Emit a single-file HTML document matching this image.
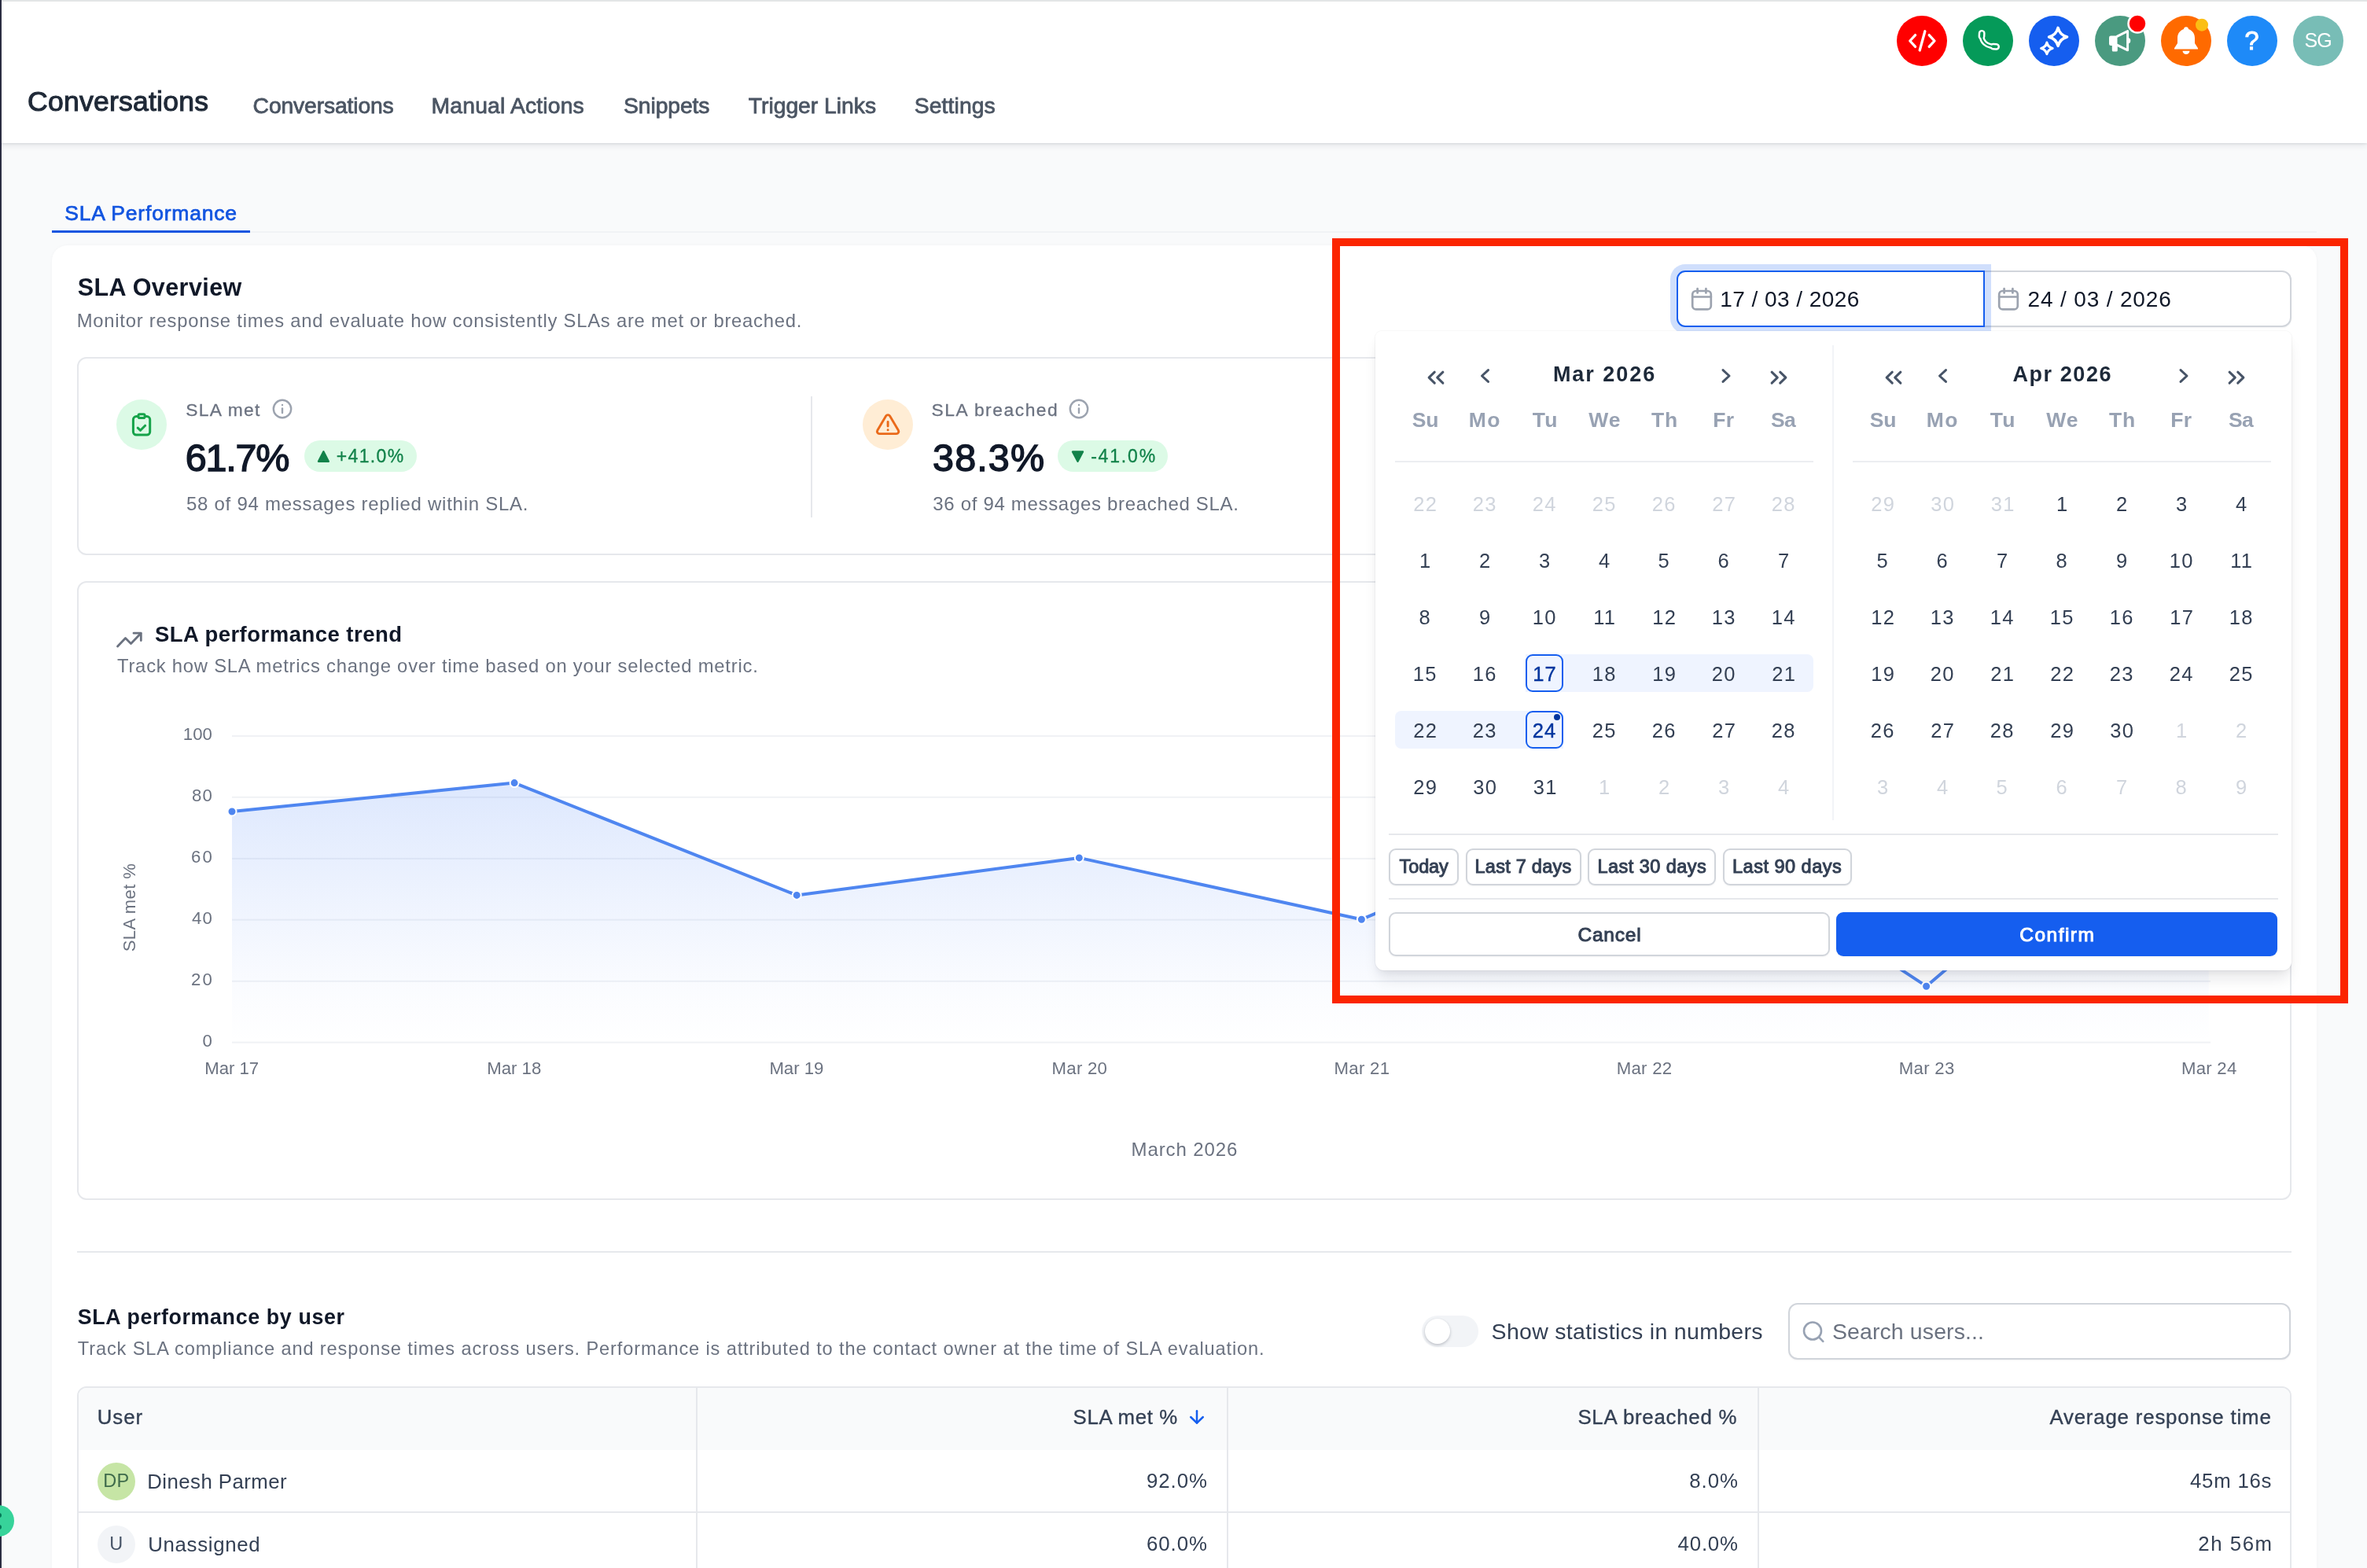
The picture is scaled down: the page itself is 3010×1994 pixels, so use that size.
<!DOCTYPE html>
<html lang="en"><head><meta charset="utf-8"><title>SLA Performance</title>
<style>
html,body{margin:0;padding:0}
body{width:3010px;height:1994px;overflow:hidden;background:#f9fafb;position:relative;font-family:'Liberation Sans',sans-serif;}
.t{position:absolute;white-space:nowrap;line-height:1;font-weight:400}
#aa{position:absolute;left:0;top:0;width:3010px;height:1994px;transform:translateZ(0);will-change:transform}
div{box-sizing:content-box}
</style></head>
<body><div id="aa">
<div style="position:absolute;left:66px;top:294px;width:2880px;height:2px;background:#f1f3f5;"></div>
<div style="position:absolute;left:66px;top:293px;width:252px;height:3px;background:#1355e0;"></div>
<div style="position:absolute;left:66px;top:312px;width:2880px;height:1720px;background:#fff;border-radius:20px;box-shadow:0 0 4px rgba(16,24,40,.03);"></div>
<div style="position:absolute;left:98px;top:453.5px;width:2812px;height:248px;border:2px solid #e6e8ec;border-radius:12px;"></div>
<div style="position:absolute;left:1031px;top:504px;width:2px;height:154px;background:#e6e8ec;"></div>
<div style="position:absolute;left:1969px;top:504px;width:2px;height:154px;background:#e6e8ec;"></div>
<div style="position:absolute;left:148px;top:508px;width:64px;height:64px;border-radius:50%;background:#dcfae6;"></div>
<div style="position:absolute;left:1097px;top:508px;width:64px;height:64px;border-radius:50%;background:#ffedd5;"></div>
<svg style="position:absolute;left:0;top:440px" width="1700" height="280" viewBox="0 440 1700 280" fill="none" stroke-linecap="round" stroke-linejoin="round"><g stroke="#16a34a" stroke-width="3"><path d="M175.500,529.600 h-2.100 a4,4 0 0 0 -4,4 v15.500 a4,4 0 0 0 4,4 h13.300 a4,4 0 0 0 4,-4 v-15.500 a4,4 0 0 0 -4,-4 h-2.100"/><rect x="176" y="526.700" width="8.100" height="4.800" rx="1.600"/><polyline points="175.200,544.200 178.600,547.300 184.600,541.200"/></g><g stroke="#ea6a1a" stroke-width="2.900"><path d="M1126.600,529.100 L1115.800,547.300 a2.900,2.900 0 0 0 2.500,4.300 h21.600 a2.900,2.900 0 0 0 2.500,-4.300 L1131.600,529.100 a2.900,2.900 0 0 0 -5,0 z"/><line x1="1129.100" y1="536.500" x2="1129.100" y2="542"/><line x1="1129.100" y1="546.800" x2="1129.100" y2="546.900"/></g><g stroke="#9ca3af" stroke-width="2.400"><circle cx="359" cy="520" r="11.200"/><line x1="359" y1="519.500" x2="359" y2="525"/><line x1="359" y1="515" x2="359" y2="515.100"/></g><g stroke="#9ca3af" stroke-width="2.400"><circle cx="1372" cy="520" r="11.200"/><line x1="1372" y1="519.500" x2="1372" y2="525"/><line x1="1372" y1="515" x2="1372" y2="515.100"/></g></svg>
<div style="position:absolute;left:387px;top:560px;width:143px;height:40px;border-radius:20px;background:#dcfae6;"></div>
<div style="position:absolute;left:1345px;top:560px;width:140px;height:40px;border-radius:20px;background:#dcfae6;"></div>
<svg style="position:absolute;left:380px;top:560px" width="1120" height="40" viewBox="380 560 1120 40" fill="#12824a" stroke="#12824a" stroke-width="2.400" stroke-linejoin="round"><polygon points="405,586.700 417.800,586.700 411.400,574.300"/><polygon points="1364,574.500 1377,574.500 1370.500,586.800"/></svg>
<div style="position:absolute;left:98px;top:739px;width:2812px;height:783px;border:2px solid #e6e8ec;border-radius:12px;"></div>
<svg style="position:absolute;left:0;top:760px" width="3010" height="640" viewBox="0 760 3010 640" fill="none"><defs><linearGradient id="ag" x1="0" y1="0" x2="0" y2="1"><stop offset="0" stop-color="#4f86f7" stop-opacity="0.22"/><stop offset="0.800" stop-color="#4f86f7" stop-opacity="0.030"/><stop offset="1" stop-color="#4f86f7" stop-opacity="0"/></linearGradient></defs><g stroke="#6b7280" stroke-width="2.800" stroke-linecap="round" stroke-linejoin="round"><polyline points="149.500,822 159.500,811.500 166.500,818.500 179,805.500"/><polyline points="170,805.200 179.300,805.200 179.300,814.500"/></g><rect x="295" y="935.0" width="2516" height="2" fill="#f0f2f5"/><rect x="295" y="1012.8" width="2516" height="2" fill="#f0f2f5"/><rect x="295" y="1090.9" width="2516" height="2" fill="#f0f2f5"/><rect x="295" y="1168.7" width="2516" height="2" fill="#f0f2f5"/><rect x="295" y="1246.8" width="2516" height="2" fill="#f0f2f5"/><rect x="295" y="1324.6" width="2516" height="2" fill="#f0f2f5"/><polygon points="295.0,1325.600 295.0,1032.0 654.1,995.6 1013.2,1138.4 1372.3,1090.9 1731.4,1169.2 2090.5,1018.0 2449.6,1254.2 2808.7,948.3 2808.7,1325.600" fill="url(#ag)"/><polyline points="295.0,1032.0 654.1,995.6 1013.2,1138.4 1372.3,1090.9 1731.4,1169.2 2090.5,1018.0 2449.6,1254.2 2808.7,948.3" stroke="#4f86f0" stroke-width="4" stroke-linejoin="round" stroke-linecap="round"/><circle cx="295.0" cy="1032.0" r="5.500" fill="#4f86f0" stroke="#fff" stroke-width="2"/><circle cx="654.1" cy="995.6" r="5.500" fill="#4f86f0" stroke="#fff" stroke-width="2"/><circle cx="1013.2" cy="1138.4" r="5.500" fill="#4f86f0" stroke="#fff" stroke-width="2"/><circle cx="1372.3" cy="1090.9" r="5.500" fill="#4f86f0" stroke="#fff" stroke-width="2"/><circle cx="1731.4" cy="1169.2" r="5.500" fill="#4f86f0" stroke="#fff" stroke-width="2"/><circle cx="2090.5" cy="1018.0" r="5.500" fill="#4f86f0" stroke="#fff" stroke-width="2"/><circle cx="2449.6" cy="1254.2" r="5.500" fill="#4f86f0" stroke="#fff" stroke-width="2"/><circle cx="2808.7" cy="948.3" r="5.500" fill="#4f86f0" stroke="#fff" stroke-width="2"/></svg>
<div style="position:absolute;left:98px;top:1591px;width:2816px;height:2px;background:#e6e8ec;"></div>
<div style="position:absolute;left:1808px;top:1673px;width:72px;height:40px;background:#f2f4f7;border-radius:20px;"></div>
<div style="position:absolute;left:1812px;top:1677px;width:32px;height:32px;background:#fff;border-radius:50%;box-shadow:0 2px 4px rgba(16,24,40,.14),0 1px 3px rgba(16,24,40,.12);"></div>
<div style="position:absolute;left:2274px;top:1657px;width:635px;height:68px;background:#fff;border:2px solid #d1d5db;border-radius:12px;box-shadow:0 1px 2px rgba(16,24,40,.05);"></div>
<svg style="position:absolute;left:2290px;top:1676px" width="34" height="34" viewBox="2290 1676 34 34" fill="none" stroke="#98a2b3" stroke-width="2.600" stroke-linecap="round"><circle cx="2305" cy="1692.500" r="11"/><line x1="2313.200" y1="1700.700" x2="2318.300" y2="1705.800"/></svg>
<div style="position:absolute;left:98px;top:1763px;width:2812px;height:300px;border:2px solid #e6e8ec;border-radius:12px;background:#fff;overflow:hidden;"></div>
<div style="position:absolute;left:100px;top:1765px;width:2812px;height:78.5px;background:#f9fafb;border-radius:10px 10px 0 0;"></div>
<div style="position:absolute;left:885px;top:1765px;width:2px;height:300px;background:#e6e8ec;"></div>
<div style="position:absolute;left:1560px;top:1765px;width:2px;height:300px;background:#e6e8ec;"></div>
<div style="position:absolute;left:2235px;top:1765px;width:2px;height:300px;background:#e6e8ec;"></div>
<div style="position:absolute;left:100px;top:1922px;width:2812px;height:2px;background:#e6e8ec;"></div>
<svg style="position:absolute;left:1508px;top:1788px" width="28" height="28" viewBox="1508 1788 28 28" fill="none" stroke="#155eef" stroke-width="2.500" stroke-linecap="round" stroke-linejoin="round"><line x1="1522" y1="1794.200" x2="1522" y2="1809.400"/><polyline points="1514.200,1802 1522,1809.600 1529.800,1802"/></svg>
<div style="position:absolute;left:124px;top:1860px;width:48px;height:48px;background:#c6e5a5;border-radius:50%;"></div>
<div style="position:absolute;left:124px;top:1940px;width:48px;height:48px;background:#f2f4f7;border-radius:50%;"></div>
<div style="position:absolute;left:0px;top:0px;width:3010px;height:182px;background:#fff;box-shadow:0 3px 8px rgba(16,24,40,.09),0 1px 3px rgba(16,24,40,.09);"></div>
<div style="position:absolute;left:0px;top:0px;width:3010px;height:2px;background:#e3e5e6;"></div>
<div style="position:absolute;left:2412px;top:20px;width:64px;height:64px;border-radius:50%;background:#ff0000;"></div>
<div style="position:absolute;left:2496px;top:20px;width:64px;height:64px;border-radius:50%;background:#059a59;"></div>
<div style="position:absolute;left:2580px;top:20px;width:64px;height:64px;border-radius:50%;background:#155eef;"></div>
<div style="position:absolute;left:2664px;top:20px;width:64px;height:64px;border-radius:50%;background:#4a9a80;"></div>
<div style="position:absolute;left:2748px;top:20px;width:64px;height:64px;border-radius:50%;background:#ff6a00;"></div>
<div style="position:absolute;left:2832px;top:20px;width:64px;height:64px;border-radius:50%;background:#1e8af8;"></div>
<div style="position:absolute;left:2916px;top:20px;width:64px;height:64px;border-radius:50%;background:#78bdb6;"></div>
<svg style="position:absolute;left:0;top:0" width="3010" height="182" viewBox="0 0 3010 182" fill="none" stroke="#fff" stroke-linecap="round" stroke-linejoin="round"><g stroke-width="3.3"><polyline points="2435.6,44.6 2428.8,52 2435.6,59.4"/><polyline points="2453.2,44.6 2460,52 2453.2,59.4"/><line x1="2447.9" y1="39.8" x2="2441.2" y2="64"/></g><g stroke="#fff" fill="none"><path d="M2520.100,43.200 Q2519,58.300 2537.800,59.300" stroke-width="6.900"/><path d="M2520.200,42.300 L2520,46.300" stroke-width="8.800"/><path d="M2534.600,59.100 L2538.600,59.400" stroke-width="8.800"/></g><g stroke="#059a59" fill="none"><path d="M2520.100,43.200 Q2519,58.300 2537.800,59.300" stroke-width="2.100"/><path d="M2520.200,42.300 L2520,46.300" stroke-width="3.900"/><path d="M2534.600,59.100 L2538.600,59.400" stroke-width="3.900"/></g><path d="M2617.1,35.4 Q2619.4,44.6 2628.6,46.9 Q2619.4,49.2 2617.1,58.4 Q2614.8,49.2 2605.6,46.9 Q2614.8,44.6 2617.1,35.4Z" stroke-width="3.600"/><path d="M2602.9,54.1 Q2604.3,60.0 2610.2,61.4 Q2604.3,62.8 2602.9,68.7 Q2601.5,62.8 2595.6,61.4 Q2601.5,60.0 2602.9,54.1Z" stroke-width="3.100"/><g fill="#fff" stroke="none"><path d="M2682,47.8 q0,-2.300 2.300,-2.300 h8.200 v12.500 h-8.200 q-2.300,0 -2.300,-2.300 z"/><path d="M2685.800,57 h7 v7 q0,1.500 -1.500,1.500 h-4 q-1.500,0 -1.500,-1.500 z"/><path d="M2706.500,48 q2.800,0.600 2.800,3.800 q0,3.200 -2.800,3.800 z"/></g><path d="M2692.500,46.200 L2705.600,39.600 V63.800 L2692.500,57.300" stroke="#fff" stroke-width="3" fill="none"/><circle cx="2718" cy="30" r="11.5" fill="#ff0000" stroke="#fff" stroke-width="2.5"/><g fill="#fff" stroke="none"><path d="M2780,34.200 c1.800,0 3,1.200 3,2.900 c5,1.600 8,6 8,11.400 v6.500 l4,6.200 v1.300 h-30 v-1.300 l4,-6.200 v-6.500 c0,-5.400 3,-9.800 8,-11.400 c0,-1.700 1.200,-2.900 3,-2.900 z"/><path d="M2775.500,64.800 h9 a4.500,4.200 0 0 1 -9,0 z"/></g><circle cx="2800" cy="31.700" r="8" fill="#fbbf14" stroke="none"/></svg>
<!-- text layer (page) -->
<span class="t" style="left:35.05px;top:112.26px;font-size:35.6px;color:#1f2937;letter-spacing:0.206px;-webkit-text-stroke:1.1px #1f2937;">Conversations</span>
<span class="t" style="left:321.60px;top:120.14px;font-size:28.3px;color:#4b5563;letter-spacing:-0.144px;-webkit-text-stroke:0.8px #4b5563;">Conversations</span>
<span class="t" style="left:548.60px;top:120.14px;font-size:28.3px;color:#4b5563;letter-spacing:0.168px;-webkit-text-stroke:0.8px #4b5563;">Manual Actions</span>
<span class="t" style="left:793.10px;top:120.14px;font-size:28.3px;color:#4b5563;letter-spacing:-0.110px;-webkit-text-stroke:0.8px #4b5563;">Snippets</span>
<span class="t" style="left:951.80px;top:120.14px;font-size:28.3px;color:#4b5563;letter-spacing:-0.021px;-webkit-text-stroke:0.8px #4b5563;">Trigger Links</span>
<span class="t" style="left:1162.80px;top:120.14px;font-size:28.3px;color:#4b5563;letter-spacing:0.101px;-webkit-text-stroke:0.8px #4b5563;">Settings</span>
<span class="t" style="left:2854.50px;top:36.29px;font-size:32.5px;color:#fff;-webkit-text-stroke:1.0px #fff;">?</span>
<span class="t" style="left:2930.40px;top:39.14px;font-size:25px;color:#fff;letter-spacing:-0.875px;">SG</span>
<span class="t" style="left:82.17px;top:257.77px;font-size:26.5px;color:#1355e0;letter-spacing:0.802px;-webkit-text-stroke:0.75px #1355e0;">SLA Performance</span>
<span class="t" style="left:98.70px;top:350.08px;font-size:30.5px;color:#101828;letter-spacing:0.419px;font-weight:700;">SLA Overview</span>
<span class="t" style="left:97.70px;top:396.15px;font-size:23.8px;color:#6b7280;letter-spacing:0.770px;">Monitor response times and evaluate how consistently SLAs are met or breached.</span>
<span class="t" style="left:236.15px;top:509.90px;font-size:22.8px;color:#6b7280;letter-spacing:1.351px;-webkit-text-stroke:0.3px #6b7280;">SLA met</span>
<span class="t" style="left:235.72px;top:557.74px;font-size:48.5px;color:#101828;letter-spacing:-1.211px;-webkit-text-stroke:1.45px #101828;">61.7%</span>
<span class="t" style="left:427.85px;top:569.33px;font-size:23px;color:#12824a;letter-spacing:1.321px;-webkit-text-stroke:0.3px #12824a;">+41.0%</span>
<span class="t" style="left:237.00px;top:629.48px;font-size:24px;color:#6b7280;letter-spacing:0.726px;">58 of 94 messages replied within SLA.</span>
<span class="t" style="left:1184.55px;top:509.90px;font-size:22.8px;color:#6b7280;letter-spacing:1.545px;-webkit-text-stroke:0.3px #6b7280;">SLA breached</span>
<span class="t" style="left:1186.02px;top:557.74px;font-size:48.5px;color:#101828;letter-spacing:1.139px;-webkit-text-stroke:1.45px #101828;">38.3%</span>
<span class="t" style="left:1387.15px;top:569.33px;font-size:23px;color:#12824a;letter-spacing:1.815px;-webkit-text-stroke:0.3px #12824a;">-41.0%</span>
<span class="t" style="left:1186.30px;top:629.48px;font-size:24px;color:#6b7280;letter-spacing:0.678px;">36 of 94 messages breached SLA.</span>
<span class="t" style="left:196.90px;top:793.12px;font-size:27.5px;color:#101828;letter-spacing:0.474px;font-weight:700;">SLA performance trend</span>
<span class="t" style="left:149.00px;top:834.65px;font-size:23.8px;color:#6b7280;letter-spacing:0.772px;">Track how SLA metrics change over time based on your selected metric.</span>
<span class="t" style="left:232.80px;top:923.41px;font-size:22.2px;color:#6b7280;letter-spacing:0.010px;">100</span>
<span class="t" style="left:243.90px;top:1001.21px;font-size:22.2px;color:#6b7280;letter-spacing:1.260px;">80</span>
<span class="t" style="left:242.90px;top:1079.31px;font-size:22.2px;color:#6b7280;letter-spacing:2.260px;">60</span>
<span class="t" style="left:243.90px;top:1157.11px;font-size:22.2px;color:#6b7280;letter-spacing:1.260px;">40</span>
<span class="t" style="left:242.90px;top:1235.21px;font-size:22.2px;color:#6b7280;letter-spacing:2.260px;">20</span>
<span class="t" style="left:257.50px;top:1313.01px;font-size:22.2px;color:#6b7280;">0</span>
<span class="t" style="left:260.20px;top:1348.11px;font-size:22.2px;color:#6b7280;letter-spacing:-0.023px;">Mar 17</span>
<span class="t" style="left:619.30px;top:1348.11px;font-size:22.2px;color:#6b7280;letter-spacing:-0.023px;">Mar 18</span>
<span class="t" style="left:978.40px;top:1348.11px;font-size:22.2px;color:#6b7280;letter-spacing:-0.023px;">Mar 19</span>
<span class="t" style="left:1337.50px;top:1348.11px;font-size:22.2px;color:#6b7280;letter-spacing:0.277px;">Mar 20</span>
<span class="t" style="left:1696.60px;top:1348.11px;font-size:22.2px;color:#6b7280;letter-spacing:0.277px;">Mar 21</span>
<span class="t" style="left:2055.70px;top:1348.11px;font-size:22.2px;color:#6b7280;letter-spacing:0.277px;">Mar 22</span>
<span class="t" style="left:2414.80px;top:1348.11px;font-size:22.2px;color:#6b7280;letter-spacing:0.277px;">Mar 23</span>
<span class="t" style="left:2773.90px;top:1348.11px;font-size:22.2px;color:#6b7280;letter-spacing:0.277px;">Mar 24</span>
<span class="t" style="left:108.59px;top:1142.50px;font-size:22px;color:#6b7280;letter-spacing:0.420px;transform:rotate(-90deg);transform-origin:50% 50%;">SLA met %</span>
<span class="t" style="left:1438.60px;top:1449.68px;font-size:24px;color:#6b7280;letter-spacing:0.879px;">March 2026</span>
<span class="t" style="left:98.80px;top:1662.01px;font-size:26.8px;color:#101828;letter-spacing:0.636px;font-weight:700;">SLA performance by user</span>
<span class="t" style="left:98.80px;top:1704.42px;font-size:23.6px;color:#6b7280;letter-spacing:0.869px;">Track SLA compliance and response times across users. Performance is attributed to the contact owner at the time of SLA evaluation.</span>
<span class="t" style="left:1896.60px;top:1678.57px;font-size:28.5px;color:#344054;letter-spacing:0.303px;">Show statistics in numbers</span>
<span class="t" style="left:2329.90px;top:1678.57px;font-size:28.5px;color:#6b7280;letter-spacing:0.104px;">Search users...</span>
<span class="t" style="left:123.77px;top:1789.86px;font-size:25.8px;color:#344054;letter-spacing:0.958px;-webkit-text-stroke:0.35px #344054;">User</span>
<span class="t" style="left:1364.58px;top:1789.66px;font-size:25.8px;color:#344054;letter-spacing:0.632px;-webkit-text-stroke:0.35px #344054;">SLA met %</span>
<span class="t" style="left:2006.38px;top:1789.66px;font-size:25.8px;color:#344054;letter-spacing:0.753px;-webkit-text-stroke:0.35px #344054;">SLA breached %</span>
<span class="t" style="left:2606.38px;top:1789.66px;font-size:25.8px;color:#344054;letter-spacing:0.829px;-webkit-text-stroke:0.35px #344054;">Average response time</span>
<span class="t" style="left:131.16px;top:1872.41px;font-size:23.5px;color:#3f6b4b;letter-spacing:0.300px;">DP</span>
<span class="t" style="left:139.30px;top:1952.41px;font-size:23.5px;color:#475467;">U</span>
<span class="t" style="left:187.30px;top:1871.96px;font-size:25.8px;color:#344054;letter-spacing:0.438px;">Dinesh Parmer</span>
<span class="t" style="left:188.30px;top:1951.86px;font-size:25.8px;color:#344054;letter-spacing:0.667px;">Unassigned</span>
<span class="t" style="left:1458.00px;top:1871.36px;font-size:25.8px;color:#344054;letter-spacing:0.948px;">92.0%</span>
<span class="t" style="left:1458.00px;top:1950.86px;font-size:25.8px;color:#344054;letter-spacing:0.948px;">60.0%</span>
<span class="t" style="left:2148.20px;top:1871.36px;font-size:25.8px;color:#344054;letter-spacing:0.980px;">8.0%</span>
<span class="t" style="left:2133.60px;top:1950.86px;font-size:25.8px;color:#344054;letter-spacing:0.798px;">40.0%</span>
<span class="t" style="left:2785.00px;top:1871.36px;font-size:25.8px;color:#344054;letter-spacing:0.759px;">45m 16s</span>
<span class="t" style="left:2795.30px;top:1950.86px;font-size:25.8px;color:#344054;letter-spacing:1.549px;">2h 56m</span>
<div style="position:absolute;left:2524px;top:344px;width:387.5px;height:68px;background:#fff;border:2px solid #d1d5db;border-left:none;border-radius:0 12px 12px 0;box-shadow:0 1px 2px rgba(16,24,40,.05);"></div>
<div style="position:absolute;left:2132px;top:344px;width:388px;height:68px;background:#fff;border:2px solid #155eef;border-radius:11px 0 0 11px;box-shadow:0 0 0 8px rgba(21,94,239,.20);"></div>
<svg style="position:absolute;left:2100px;top:330px" width="840" height="100" viewBox="2100 330 840 100"><g transform="translate(2151,366)" stroke="#9ca3af" stroke-width="2.700" fill="none" stroke-linecap="round" stroke-linejoin="round"><rect x="1.200" y="4" width="23.600" height="23.400" rx="4.500"/><line x1="1.200" y1="11.500" x2="24.800" y2="11.500"/><line x1="7.600" y1="1.200" x2="7.600" y2="6.500"/><line x1="18.400" y1="1.200" x2="18.400" y2="6.500"/></g><g transform="translate(2541,366)" stroke="#9ca3af" stroke-width="2.700" fill="none" stroke-linecap="round" stroke-linejoin="round"><rect x="1.200" y="4" width="23.600" height="23.400" rx="4.500"/><line x1="1.200" y1="11.500" x2="24.800" y2="11.500"/><line x1="7.600" y1="1.200" x2="7.600" y2="6.500"/><line x1="18.400" y1="1.200" x2="18.400" y2="6.500"/></g></svg>
<div style="position:absolute;left:1749px;top:421px;width:1165px;height:813px;background:#fff;border-radius:8px 8px 11px 11px;box-shadow:0 0 0 1px rgba(16,24,40,.03),0 14px 18px -4px rgba(16,24,40,.10),0 4px 8px -2px rgba(16,24,40,.05);"></div>
<div style="position:absolute;left:2330px;top:439px;width:2px;height:604px;background:#f2f4f7;"></div>
<div style="position:absolute;left:1774px;top:585.5px;width:532px;height:2px;background:#eceef1;"></div>
<div style="position:absolute;left:2356px;top:585.5px;width:532px;height:2px;background:#eceef1;"></div>
<div style="position:absolute;left:1940px;top:832px;width:366px;height:48px;background:#eff4ff;border-radius:0 8px 8px 0;"></div>
<div style="position:absolute;left:1774px;top:904px;width:214px;height:48px;background:#eff4ff;border-radius:8px 0 0 8px;"></div>
<div style="position:absolute;left:1940px;top:832px;width:44px;height:44px;background:#eff4ff;border:2px solid #155eef;border-radius:9px;"></div>
<div style="position:absolute;left:1940px;top:904px;width:44px;height:44px;background:#eff4ff;border:2px solid #155eef;border-radius:9px;"></div>
<div style="position:absolute;left:1976px;top:908px;width:8px;height:8px;background:#00359e;border-radius:50%;"></div>
<svg style="position:absolute;left:1749px;top:440px" width="1164" height="80" viewBox="1749 440 1164 80" fill="none" stroke="#475467" stroke-width="3" stroke-linecap="round" stroke-linejoin="round"><polyline points="1824.3,473.200 1817.1,480.200 1824.3,487.200"/><polyline points="1834.9,473.200 1827.7,480.200 1834.9,487.200"/><polyline points="1892.5,470.600 1884.5,478 1892.5,485.400"/><polyline points="2191.0,470.600 2199.0,478 2191.0,485.400"/><polyline points="2253.1,473.200 2260.3,480.200 2253.1,487.200"/><polyline points="2263.7,473.200 2270.9,480.200 2263.7,487.200"/><polyline points="2406.3,473.200 2399.1,480.200 2406.3,487.200"/><polyline points="2416.9,473.200 2409.7,480.200 2416.9,487.200"/><polyline points="2474.5,470.600 2466.5,478 2474.5,485.400"/><polyline points="2773.0,470.600 2781.0,478 2773.0,485.400"/><polyline points="2835.1,473.200 2842.3,480.200 2835.1,487.200"/><polyline points="2845.7,473.200 2852.9,480.200 2845.7,487.200"/></svg>
<div style="position:absolute;left:1766px;top:1060px;width:1131px;height:2px;background:#e6e8ec;"></div>
<div style="position:absolute;left:1766px;top:1142px;width:1131px;height:2px;background:#e6e8ec;"></div>
<div style="position:absolute;left:1766px;top:1078.5px;width:84.5px;height:43px;border:2px solid #d1d5db;border-radius:9px;box-shadow:0 1px 2px rgba(16,24,40,.05);background:#fff;"></div>
<div style="position:absolute;left:1863.5px;top:1078.5px;width:143.0px;height:43px;border:2px solid #d1d5db;border-radius:9px;box-shadow:0 1px 2px rgba(16,24,40,.05);background:#fff;"></div>
<div style="position:absolute;left:2019.4px;top:1078.5px;width:159.0999999999999px;height:43px;border:2px solid #d1d5db;border-radius:9px;box-shadow:0 1px 2px rgba(16,24,40,.05);background:#fff;"></div>
<div style="position:absolute;left:2191.2px;top:1078.5px;width:159.80000000000018px;height:43px;border:2px solid #d1d5db;border-radius:9px;box-shadow:0 1px 2px rgba(16,24,40,.05);background:#fff;"></div>
<div style="position:absolute;left:1766px;top:1160px;width:556.5px;height:51.5px;border:2px solid #d1d5db;border-radius:9px;box-shadow:0 1px 2px rgba(16,24,40,.05);background:#fff;"></div>
<div style="position:absolute;left:2335px;top:1160px;width:561px;height:55.5px;background:#155eef;border-radius:9px;box-shadow:0 1px 2px rgba(16,24,40,.05);"></div>
<!-- text layer (date picker) -->
<span class="t" style="left:2187.30px;top:367.00px;font-size:28px;color:#101828;letter-spacing:0.448px;">17 / 03 / 2026</span>
<span class="t" style="left:2578.50px;top:367.00px;font-size:28px;color:#101828;letter-spacing:0.848px;">24 / 03 / 2026</span>
<span class="t" style="left:1974.90px;top:462.74px;font-size:27px;color:#1d2939;letter-spacing:1.977px;font-weight:700;">Mar 2026</span>
<span class="t" style="left:2559.50px;top:462.74px;font-size:27px;color:#1d2939;letter-spacing:1.565px;font-weight:700;">Apr 2026</span>
<span class="t" style="left:1795.75px;top:521.07px;font-size:26.5px;color:#98a2b3;letter-spacing:-0.175px;font-weight:700;">Su</span>
<span class="t" style="left:1867.65px;top:521.07px;font-size:26.5px;color:#98a2b3;letter-spacing:1.625px;font-weight:700;">Mo</span>
<span class="t" style="left:1948.70px;top:521.07px;font-size:26.5px;color:#98a2b3;letter-spacing:1.380px;font-weight:700;">Tu</span>
<span class="t" style="left:2020.15px;top:521.07px;font-size:26.5px;color:#98a2b3;letter-spacing:1.167px;font-weight:700;">We</span>
<span class="t" style="left:2099.95px;top:521.07px;font-size:26.5px;color:#98a2b3;letter-spacing:0.913px;font-weight:700;">Th</span>
<span class="t" style="left:2178.25px;top:521.07px;font-size:26.5px;color:#98a2b3;letter-spacing:0.313px;font-weight:700;">Fr</span>
<span class="t" style="left:2251.90px;top:521.07px;font-size:26.5px;color:#98a2b3;letter-spacing:-0.475px;font-weight:700;">Sa</span>
<span class="t" style="left:2377.75px;top:521.07px;font-size:26.5px;color:#98a2b3;letter-spacing:-0.175px;font-weight:700;">Su</span>
<span class="t" style="left:2449.65px;top:521.07px;font-size:26.5px;color:#98a2b3;letter-spacing:1.625px;font-weight:700;">Mo</span>
<span class="t" style="left:2530.70px;top:521.07px;font-size:26.5px;color:#98a2b3;letter-spacing:1.380px;font-weight:700;">Tu</span>
<span class="t" style="left:2602.15px;top:521.07px;font-size:26.5px;color:#98a2b3;letter-spacing:1.167px;font-weight:700;">We</span>
<span class="t" style="left:2681.95px;top:521.07px;font-size:26.5px;color:#98a2b3;letter-spacing:0.913px;font-weight:700;">Th</span>
<span class="t" style="left:2760.25px;top:521.07px;font-size:26.5px;color:#98a2b3;letter-spacing:0.313px;font-weight:700;">Fr</span>
<span class="t" style="left:2833.90px;top:521.07px;font-size:26.5px;color:#98a2b3;letter-spacing:-0.475px;font-weight:700;">Sa</span>
<span class="t" style="left:1797.36px;top:628.61px;font-size:25.5px;color:#d0d5dd;letter-spacing:1.100px;">22</span>
<span class="t" style="left:2379.36px;top:628.61px;font-size:25.5px;color:#d0d5dd;letter-spacing:1.100px;">29</span>
<span class="t" style="left:1872.86px;top:628.61px;font-size:25.5px;color:#d0d5dd;letter-spacing:1.100px;">23</span>
<span class="t" style="left:2455.36px;top:628.61px;font-size:25.5px;color:#d0d5dd;letter-spacing:1.100px;">30</span>
<span class="t" style="left:1948.86px;top:628.61px;font-size:25.5px;color:#d0d5dd;letter-spacing:1.100px;">24</span>
<span class="t" style="left:2531.86px;top:628.61px;font-size:25.5px;color:#d0d5dd;letter-spacing:1.100px;">31</span>
<span class="t" style="left:2024.86px;top:628.61px;font-size:25.5px;color:#d0d5dd;letter-spacing:1.100px;">25</span>
<span class="t" style="left:2615.00px;top:628.61px;font-size:25.5px;color:#344054;letter-spacing:1.100px;">1</span>
<span class="t" style="left:2100.86px;top:628.61px;font-size:25.5px;color:#d0d5dd;letter-spacing:1.100px;">26</span>
<span class="t" style="left:2691.00px;top:628.61px;font-size:25.5px;color:#344054;letter-spacing:1.100px;">2</span>
<span class="t" style="left:2177.36px;top:628.61px;font-size:25.5px;color:#d0d5dd;letter-spacing:1.100px;">27</span>
<span class="t" style="left:2767.00px;top:628.61px;font-size:25.5px;color:#344054;letter-spacing:1.100px;">3</span>
<span class="t" style="left:2252.86px;top:628.61px;font-size:25.5px;color:#d0d5dd;letter-spacing:1.100px;">28</span>
<span class="t" style="left:2843.00px;top:628.61px;font-size:25.5px;color:#344054;letter-spacing:1.100px;">4</span>
<span class="t" style="left:1805.00px;top:700.61px;font-size:25.5px;color:#344054;letter-spacing:1.100px;">1</span>
<span class="t" style="left:2386.50px;top:700.61px;font-size:25.5px;color:#344054;letter-spacing:1.100px;">5</span>
<span class="t" style="left:1881.00px;top:700.61px;font-size:25.5px;color:#344054;letter-spacing:1.100px;">2</span>
<span class="t" style="left:2462.50px;top:700.61px;font-size:25.5px;color:#344054;letter-spacing:1.100px;">6</span>
<span class="t" style="left:1957.00px;top:700.61px;font-size:25.5px;color:#344054;letter-spacing:1.100px;">3</span>
<span class="t" style="left:2539.00px;top:700.61px;font-size:25.5px;color:#344054;letter-spacing:1.100px;">7</span>
<span class="t" style="left:2033.00px;top:700.61px;font-size:25.5px;color:#344054;letter-spacing:1.100px;">4</span>
<span class="t" style="left:2614.50px;top:700.61px;font-size:25.5px;color:#344054;letter-spacing:1.100px;">8</span>
<span class="t" style="left:2108.50px;top:700.61px;font-size:25.5px;color:#344054;letter-spacing:1.100px;">5</span>
<span class="t" style="left:2691.00px;top:700.61px;font-size:25.5px;color:#344054;letter-spacing:1.100px;">9</span>
<span class="t" style="left:2184.50px;top:700.61px;font-size:25.5px;color:#344054;letter-spacing:1.100px;">6</span>
<span class="t" style="left:2758.86px;top:700.61px;font-size:25.5px;color:#344054;letter-spacing:1.100px;">10</span>
<span class="t" style="left:2261.00px;top:700.61px;font-size:25.5px;color:#344054;letter-spacing:1.100px;">7</span>
<span class="t" style="left:2836.31px;top:700.61px;font-size:25.5px;color:#344054;letter-spacing:1.100px;">11</span>
<span class="t" style="left:1804.50px;top:772.61px;font-size:25.5px;color:#344054;letter-spacing:1.100px;">8</span>
<span class="t" style="left:2379.36px;top:772.61px;font-size:25.5px;color:#344054;letter-spacing:1.100px;">12</span>
<span class="t" style="left:1881.00px;top:772.61px;font-size:25.5px;color:#344054;letter-spacing:1.100px;">9</span>
<span class="t" style="left:2454.86px;top:772.61px;font-size:25.5px;color:#344054;letter-spacing:1.100px;">13</span>
<span class="t" style="left:1948.86px;top:772.61px;font-size:25.5px;color:#344054;letter-spacing:1.100px;">10</span>
<span class="t" style="left:2530.86px;top:772.61px;font-size:25.5px;color:#344054;letter-spacing:1.100px;">14</span>
<span class="t" style="left:2026.31px;top:772.61px;font-size:25.5px;color:#344054;letter-spacing:1.100px;">11</span>
<span class="t" style="left:2606.86px;top:772.61px;font-size:25.5px;color:#344054;letter-spacing:1.100px;">15</span>
<span class="t" style="left:2101.36px;top:772.61px;font-size:25.5px;color:#344054;letter-spacing:1.100px;">12</span>
<span class="t" style="left:2682.86px;top:772.61px;font-size:25.5px;color:#344054;letter-spacing:1.100px;">16</span>
<span class="t" style="left:2176.86px;top:772.61px;font-size:25.5px;color:#344054;letter-spacing:1.100px;">13</span>
<span class="t" style="left:2759.36px;top:772.61px;font-size:25.5px;color:#344054;letter-spacing:1.100px;">17</span>
<span class="t" style="left:2252.86px;top:772.61px;font-size:25.5px;color:#344054;letter-spacing:1.100px;">14</span>
<span class="t" style="left:2834.86px;top:772.61px;font-size:25.5px;color:#344054;letter-spacing:1.100px;">18</span>
<span class="t" style="left:1796.86px;top:844.61px;font-size:25.5px;color:#344054;letter-spacing:1.100px;">15</span>
<span class="t" style="left:2379.36px;top:844.61px;font-size:25.5px;color:#344054;letter-spacing:1.100px;">19</span>
<span class="t" style="left:1872.86px;top:844.61px;font-size:25.5px;color:#344054;letter-spacing:1.100px;">16</span>
<span class="t" style="left:2454.86px;top:844.61px;font-size:25.5px;color:#344054;letter-spacing:1.100px;">20</span>
<span class="t" style="left:1949.16px;top:844.61px;font-size:25.5px;color:#00359e;letter-spacing:1.100px;-webkit-text-stroke:0.4px #00359e;">17</span>
<span class="t" style="left:2531.36px;top:844.61px;font-size:25.5px;color:#344054;letter-spacing:1.100px;">21</span>
<span class="t" style="left:2024.86px;top:844.61px;font-size:25.5px;color:#344054;letter-spacing:1.100px;">18</span>
<span class="t" style="left:2607.36px;top:844.61px;font-size:25.5px;color:#344054;letter-spacing:1.100px;">22</span>
<span class="t" style="left:2101.36px;top:844.61px;font-size:25.5px;color:#344054;letter-spacing:1.100px;">19</span>
<span class="t" style="left:2682.86px;top:844.61px;font-size:25.5px;color:#344054;letter-spacing:1.100px;">23</span>
<span class="t" style="left:2176.86px;top:844.61px;font-size:25.5px;color:#344054;letter-spacing:1.100px;">20</span>
<span class="t" style="left:2758.86px;top:844.61px;font-size:25.5px;color:#344054;letter-spacing:1.100px;">24</span>
<span class="t" style="left:2253.36px;top:844.61px;font-size:25.5px;color:#344054;letter-spacing:1.100px;">21</span>
<span class="t" style="left:2834.86px;top:844.61px;font-size:25.5px;color:#344054;letter-spacing:1.100px;">25</span>
<span class="t" style="left:1797.36px;top:916.61px;font-size:25.5px;color:#344054;letter-spacing:1.100px;">22</span>
<span class="t" style="left:2378.86px;top:916.61px;font-size:25.5px;color:#344054;letter-spacing:1.100px;">26</span>
<span class="t" style="left:1872.86px;top:916.61px;font-size:25.5px;color:#344054;letter-spacing:1.100px;">23</span>
<span class="t" style="left:2455.36px;top:916.61px;font-size:25.5px;color:#344054;letter-spacing:1.100px;">27</span>
<span class="t" style="left:1948.66px;top:916.61px;font-size:25.5px;color:#00359e;letter-spacing:1.100px;-webkit-text-stroke:0.4px #00359e;">24</span>
<span class="t" style="left:2530.86px;top:916.61px;font-size:25.5px;color:#344054;letter-spacing:1.100px;">28</span>
<span class="t" style="left:2024.86px;top:916.61px;font-size:25.5px;color:#344054;letter-spacing:1.100px;">25</span>
<span class="t" style="left:2607.36px;top:916.61px;font-size:25.5px;color:#344054;letter-spacing:1.100px;">29</span>
<span class="t" style="left:2100.86px;top:916.61px;font-size:25.5px;color:#344054;letter-spacing:1.100px;">26</span>
<span class="t" style="left:2683.36px;top:916.61px;font-size:25.5px;color:#344054;letter-spacing:1.100px;">30</span>
<span class="t" style="left:2177.36px;top:916.61px;font-size:25.5px;color:#344054;letter-spacing:1.100px;">27</span>
<span class="t" style="left:2767.00px;top:916.61px;font-size:25.5px;color:#d0d5dd;letter-spacing:1.100px;">1</span>
<span class="t" style="left:2252.86px;top:916.61px;font-size:25.5px;color:#344054;letter-spacing:1.100px;">28</span>
<span class="t" style="left:2843.00px;top:916.61px;font-size:25.5px;color:#d0d5dd;letter-spacing:1.100px;">2</span>
<span class="t" style="left:1797.36px;top:988.61px;font-size:25.5px;color:#344054;letter-spacing:1.100px;">29</span>
<span class="t" style="left:2387.00px;top:988.61px;font-size:25.5px;color:#d0d5dd;letter-spacing:1.100px;">3</span>
<span class="t" style="left:1873.36px;top:988.61px;font-size:25.5px;color:#344054;letter-spacing:1.100px;">30</span>
<span class="t" style="left:2463.00px;top:988.61px;font-size:25.5px;color:#d0d5dd;letter-spacing:1.100px;">4</span>
<span class="t" style="left:1949.86px;top:988.61px;font-size:25.5px;color:#344054;letter-spacing:1.100px;">31</span>
<span class="t" style="left:2538.50px;top:988.61px;font-size:25.5px;color:#d0d5dd;letter-spacing:1.100px;">5</span>
<span class="t" style="left:2033.00px;top:988.61px;font-size:25.5px;color:#d0d5dd;letter-spacing:1.100px;">1</span>
<span class="t" style="left:2614.50px;top:988.61px;font-size:25.5px;color:#d0d5dd;letter-spacing:1.100px;">6</span>
<span class="t" style="left:2109.00px;top:988.61px;font-size:25.5px;color:#d0d5dd;letter-spacing:1.100px;">2</span>
<span class="t" style="left:2691.00px;top:988.61px;font-size:25.5px;color:#d0d5dd;letter-spacing:1.100px;">7</span>
<span class="t" style="left:2185.00px;top:988.61px;font-size:25.5px;color:#d0d5dd;letter-spacing:1.100px;">3</span>
<span class="t" style="left:2766.50px;top:988.61px;font-size:25.5px;color:#d0d5dd;letter-spacing:1.100px;">8</span>
<span class="t" style="left:2261.00px;top:988.61px;font-size:25.5px;color:#d0d5dd;letter-spacing:1.100px;">4</span>
<span class="t" style="left:2843.00px;top:988.61px;font-size:25.5px;color:#d0d5dd;letter-spacing:1.100px;">9</span>
<span class="t" style="left:1779.50px;top:1091.01px;font-size:23.5px;color:#344054;letter-spacing:-0.090px;-webkit-text-stroke:1.0px #344054;">Today</span>
<span class="t" style="left:1875.50px;top:1091.01px;font-size:23.5px;color:#344054;letter-spacing:0.256px;-webkit-text-stroke:1.0px #344054;">Last 7 days</span>
<span class="t" style="left:2031.50px;top:1091.01px;font-size:23.5px;color:#344054;letter-spacing:0.445px;-webkit-text-stroke:1.0px #344054;">Last 30 days</span>
<span class="t" style="left:2203.00px;top:1091.01px;font-size:23.5px;color:#344054;letter-spacing:0.500px;-webkit-text-stroke:1.0px #344054;">Last 90 days</span>
<span class="t" style="left:2006.40px;top:1176.56px;font-size:24.5px;color:#344054;letter-spacing:0.816px;-webkit-text-stroke:1.0px #344054;">Cancel</span>
<span class="t" style="left:2568.30px;top:1176.56px;font-size:24.5px;color:#fff;letter-spacing:1.474px;-webkit-text-stroke:1.0px #fff;">Confirm</span>
<div style="position:absolute;left:1694px;top:303px;width:1272px;height:953px;border:10px solid #fb2500;z-index:50;"></div>
<div style="position:absolute;left:-22px;top:1914px;width:40px;height:40px;background:#37d39a;border-radius:50%;z-index:60;"></div>
<div style="position:absolute;left:-4px;top:1924px;width:6px;height:6px;background:#047857;border-radius:50%;z-index:61;"></div>
<div style="position:absolute;left:-4px;top:1939px;width:6px;height:6px;background:#047857;border-radius:50%;z-index:61;"></div>
<div style="position:absolute;left:0px;top:0px;width:2px;height:1994px;background:#2b2d42;z-index:59;"></div>
</div>
<script>(function(){var w=window.innerWidth||3010;if(Math.abs(w-3010)>4){var a=document.getElementById('aa');a.style.zoom=w/3010;}})();</script>
</body></html>
